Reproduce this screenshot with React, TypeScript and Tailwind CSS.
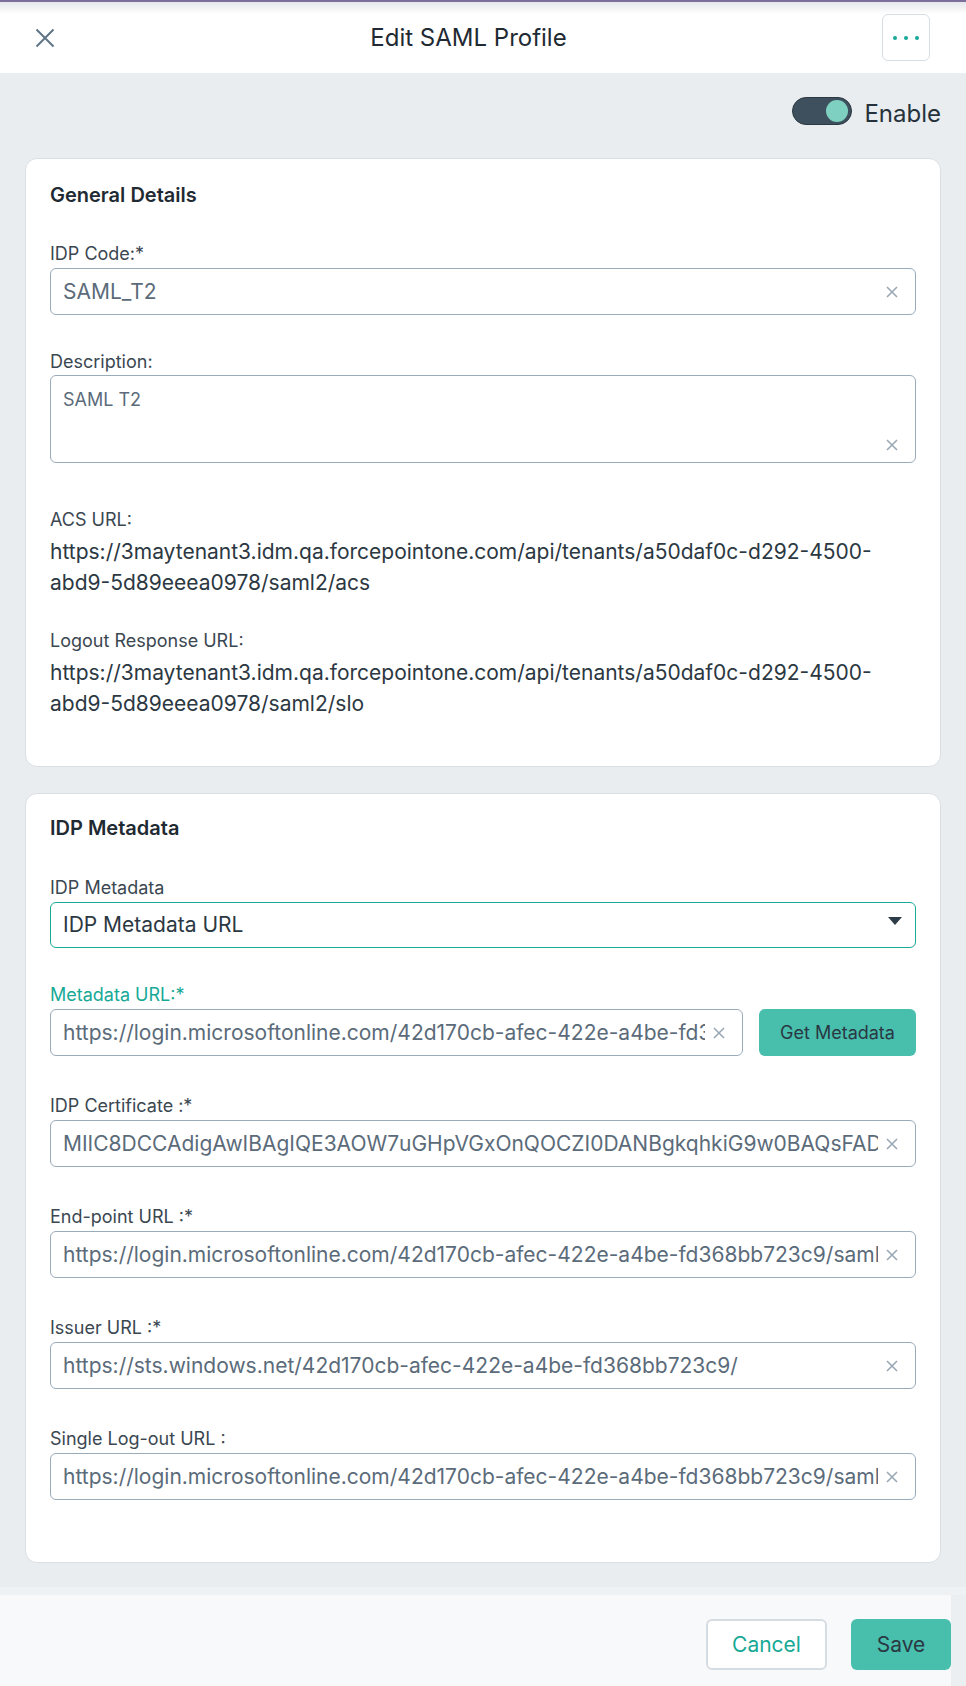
const font = { fontFamily: 'Inter, "Noto Sans", sans-serif' }

function ClearIcon() {
  return (
    <svg className="h-[14px] w-[14px] shrink-0 text-[#9aa8b5]" viewBox="0 0 14 14" fill="none" stroke="currentColor" strokeWidth={1.6}>
      <path d="M2 2l10 10M12 2L2 12" />
    </svg>
  )
}

function Field({ label, value, teal = false }: { label: string; value: string; teal?: boolean }) {
  return (
    <div>
      <div className={`h-5 text-[18px] leading-5 ${teal ? 'text-[#17a996]' : 'text-[#3b4751]'}`}>{label}</div>
      <div className="mt-1 flex h-[47px] items-center gap-[7px] rounded-md border border-[#9aabba] bg-white pl-3 pr-[16px]">
        <input
          readOnly
          defaultValue={value}
          className="min-w-0 flex-1 bg-transparent text-[21px] text-[#5b6b7a] outline-none"
          style={font}
        />
        <ClearIcon />
      </div>
    </div>
  )
}

function UrlBlock({ label, lines }: { label: string; lines: string[] }) {
  return (
    <div>
      <div className="h-5 text-[18px] leading-5 text-[#3b4751]">{label}</div>
      <div className="mt-[6px] text-[21px] leading-[31px] text-[#2c3842]">
        {lines.map((l) => (
          <div key={l}>{l}</div>
        ))}
      </div>
    </div>
  )
}

export default function App() {
  return (
    <div className="flex min-h-[1686px] w-[966px] flex-col bg-[#e9edf0]" style={font}>
      {/* header */}
      <div className="relative flex h-[73px] items-center border-t-2 border-[#7d6f9c] bg-white">
        <div className="pointer-events-none absolute inset-x-0 top-0 h-[12px] bg-gradient-to-b from-[#e6e7ea] to-white" />
        <div className="relative pl-[35px]">
          <svg className="h-[20px] w-[20px] text-[#5f7587]" viewBox="0 0 20 20" fill="none" stroke="currentColor" strokeWidth={2}>
            <path d="M1.5 1.5l17 17M18.5 1.5l-17 17" />
          </svg>
        </div>
        <div className="relative flex-1 text-center text-[24px] text-[#1f2a33]">Edit SAML Profile</div>
        <button className="relative mr-[36px] flex h-[47px] w-[48px] items-center justify-center gap-[7px] rounded-md border border-[#d6dee4] bg-white">
          <span className="h-[4px] w-[4px] rounded-full bg-[#17a996]" />
          <span className="h-[4px] w-[4px] rounded-full bg-[#17a996]" />
          <span className="h-[4px] w-[4px] rounded-full bg-[#17a996]" />
        </button>
      </div>

      {/* enable toggle */}
      <div className="mt-[24px] flex h-[28px] items-center justify-end gap-3 pr-[25px]">
        <div className="flex h-[28px] w-[60px] items-center justify-end rounded-full border border-[#2a3944] bg-[#3e505d] pr-[3px]">
          <span className="h-[22px] w-[22px] rounded-full bg-[#7ed1c1]" />
        </div>
        <span className="mt-[5px] text-[24px] leading-7 text-[#26323b]">Enable</span>
      </div>

      {/* general details */}
      <div className="mx-[25px] mt-[33px] rounded-xl border border-[#d9dfe4] bg-white px-6 pb-[47px] pt-6">
        <div className="text-[20px] font-semibold leading-6 text-[#1f2a33]">General Details</div>
        <div className="mt-[37px] flex flex-col gap-10">
          <Field label="IDP Code:*" value="SAML_T2" />
          <div className="-mt-[3px]">
            <div className="h-5 text-[18px] leading-5 text-[#3b4751]">Description:</div>
            <div className="mt-[3px] flex h-[88px] flex-col justify-between rounded-md border border-[#9aabba] bg-white pb-[10px] pl-3 pr-[16px] pt-[12px]">
              <div className="text-[18px] leading-6 text-[#5b6b7a]">SAML T2</div>
              <div className="flex justify-end">
                <ClearIcon />
              </div>
            </div>
          </div>
        </div>
        <div className="mt-[47px]">
          <UrlBlock
            label="ACS URL:"
            lines={['https://3maytenant3.idm.qa.forcepointone.com/api/tenants/a50daf0c-d292-4500-', 'abd9-5d89eeea0978/saml2/acs']}
          />
        </div>
        <div className="mt-[33px]">
          <UrlBlock
            label="Logout Response URL:"
            lines={['https://3maytenant3.idm.qa.forcepointone.com/api/tenants/a50daf0c-d292-4500-', 'abd9-5d89eeea0978/saml2/slo']}
          />
        </div>
      </div>

      {/* idp metadata */}
      <div className="mx-[25px] mt-[26px] rounded-xl border border-[#d9dfe4] bg-white px-6 pb-[62px] pt-[22px]">
        <div className="text-[20px] font-semibold leading-6 text-[#1f2a33]">IDP Metadata</div>
        <div className="mt-[38px]">
          <div className="h-5 text-[18px] leading-5 text-[#3b4751]">IDP Metadata</div>
          <div className="mt-1 flex h-[46px] items-center justify-between rounded-md border border-[#19ab98] bg-white pl-3 pr-[13px]">
            <span className="text-[21px] text-[#2c3842]">IDP Metadata URL</span>
            <svg className="-mt-[8px] h-[8px] w-[14px] text-[#2e3c47]" viewBox="0 0 14 8" fill="currentColor">
              <path d="M0 0h14L7 8z" />
            </svg>
          </div>
        </div>
        <div className="mt-[37px] flex flex-col gap-10">
          <div className="flex items-end gap-4">
            <div className="flex-1">
              <Field label="Metadata URL:*" value="https://login.microsoftonline.com/42d170cb-afec-422e-a4be-fd368bb723c9/federationmetadata/2007-06/federationmetadata.xml" teal />
            </div>
            <button className="h-[47px] w-[157px] rounded-md bg-[#48bead] text-[18px] text-[#2a3843]">Get Metadata</button>
          </div>
          <Field label="IDP Certificate :*" value="MIIC8DCCAdigAwIBAgIQE3AOW7uGHpVGxOnQOCZI0DANBgkqhkiG9w0BAQsFADA0MTIwMAYDVQQD" />
          <Field label="End-point URL :*" value="https://login.microsoftonline.com/42d170cb-afec-422e-a4be-fd368bb723c9/saml2" />
          <Field label="Issuer URL :*" value="https://sts.windows.net/42d170cb-afec-422e-a4be-fd368bb723c9/" />
          <Field label="Single Log-out URL :" value="https://login.microsoftonline.com/42d170cb-afec-422e-a4be-fd368bb723c9/saml2" />
        </div>
      </div>

      {/* footer */}
      <div className="mt-[24px] flex flex-1 border-t-[8px] border-[#eff2f4]">
        <div className="flex flex-1 justify-end gap-6 bg-[#f7f9fa] pt-[24px]">
          <button className="h-[51px] w-[121px] rounded-md border-2 border-[#d5dce2] bg-white text-[21px] text-[#17a996]">Cancel</button>
          <button className="h-[51px] w-[100px] rounded-md bg-[#48bead] text-[21px] text-[#2a3843]">Save</button>
        </div>
        <div className="w-[15px] bg-[#eceff2]" />
      </div>
    </div>
  )
}
